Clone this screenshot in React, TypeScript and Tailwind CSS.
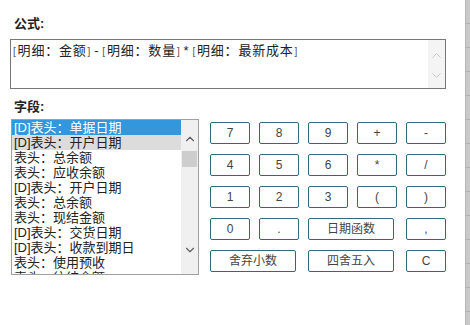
import { ChevronDown, ChevronUp } from "lucide-react";

const FONT = { fontFamily: '"Liberation Sans", "Noto Sans CJK SC", sans-serif' };

// Field list rows; the last one is only half visible, as in the dialog.
const FIELDS = [
  "[D]表头：单据日期",
  "[D]表头：开户日期",
  "表头：总余额",
  "表头：应收余额",
  "[D]表头：开户日期",
  "表头：总余额",
  "表头：现结金额",
  "[D]表头：交货日期",
  "[D]表头：收款到期日",
  "表头：使用预收",
  "表头：往结余额",
];

type Key = { label: string; wide?: boolean };
const KEYS: Key[] = [
  { label: "7" }, { label: "8" }, { label: "9" }, { label: "+" }, { label: "-" },
  { label: "4" }, { label: "5" }, { label: "6" }, { label: "*" }, { label: "/" },
  { label: "1" }, { label: "2" }, { label: "3" }, { label: "(" }, { label: ")" },
  { label: "0" }, { label: "." }, { label: "日期函数", wide: true }, { label: "," },
  { label: "舍弃小数", wide: true }, { label: "四舍五入", wide: true }, { label: "C" },
];

function Br({ c }: { c: string }) {
  return <span className="mx-[1px] text-[10px] text-[#555]">{c}</span>;
}

function Op({ c }: { c: string }) {
  return <span className="mx-[2px]">{c}</span>;
}

export default function App() {
  return (
    <div className="flex h-[325px] w-[470px] overflow-hidden bg-white text-[#222]" style={FONT}>
      <div className="flex-1 pl-[10px] pt-[16px]">
        <div className="pl-[4px] text-[13px] font-bold leading-[16px]">公式:</div>
        <div className="mt-[7px] flex h-[50px] w-[436px] border border-[#777]">
          <div className="flex-1 pl-[1px] pt-[3px] text-[13px] leading-[16px] tracking-[0.8px]">
            <Br c="[" />明细：金额<Br c="]" /><Op c="-" /><Br c="[" />明细：数量<Br c="]" /><Op c="*" /><Br c="[" />明细：最新成本<Br c="]" />
          </div>
          <div className="flex w-[17px] flex-col items-center justify-center gap-[5px] bg-[#f4f4f4] pt-[2px] text-[#c4c4c4]">
            <ChevronUp size={15} strokeWidth={1.5} />
            <ChevronDown size={15} strokeWidth={1.5} />
          </div>
        </div>

        <div className="mt-[10px] pl-[4px] text-[13px] font-bold leading-[16px]">字段:</div>
        <div className="mt-[4px] flex items-start gap-[11px]">
          <div className="ml-[1px] flex h-[156px] w-[188px] border border-[#a0a0a0]">
            <div className="flex-1 overflow-hidden">
              {FIELDS.map((f, i) => (
                <div
                  key={i}
                  className={
                    "h-[15px] whitespace-nowrap pl-[2px] text-[13px] leading-[15px] " +
                    (i === 0 ? "bg-[#3297dd] text-white" : i === 1 ? "bg-[#dcdcdc]" : "")
                  }
                >
                  {f}
                </div>
              ))}
            </div>
            <div className="flex w-[17px] flex-col items-center bg-[#f0f0f0] text-[#606060]">
              <ChevronUp size={14} strokeWidth={2} className="mt-[12px]" />
              <div className="mt-[5px] h-[16px] w-[15px] bg-[#cdcdcd]" />
              <div className="flex-1" />
              <ChevronDown size={14} strokeWidth={2} className="mb-[17px]" />
            </div>
          </div>

          <div className="mt-[3px] grid grid-cols-[repeat(5,40px)] gap-x-[9px] gap-y-[10px]">
            {KEYS.map((k, i) => (
              <button
                key={i}
                className={
                  "h-[22px] rounded-[2px] border border-[#2e6b78] bg-white text-[12px] leading-[20px] text-[#444] " +
                  (k.wide ? "col-span-2 w-[86px]" : "w-[40px]")
                }
              >
                {k.label}
              </button>
            ))}
          </div>
        </div>
      </div>
      <div className="flex w-[5px] flex-col border-l border-[#b5b5b5] bg-[#c9c9c9]">
        {Array.from({ length: 13 }).map((_, i) => (
          <div key={i} className="h-[24px] border-b border-[#b0b0b0]" />
        ))}
      </div>
    </div>
  );
}
